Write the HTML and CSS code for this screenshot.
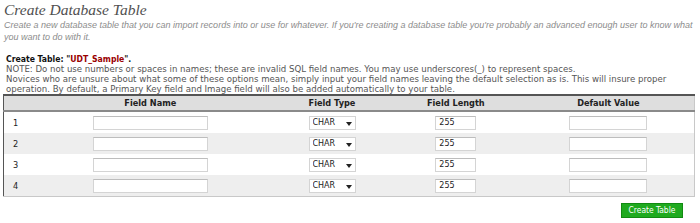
FILE: index.html
```html
<!DOCTYPE html>
<html>
<head>
<meta charset="utf-8">
<link rel="stylesheet" href="styles.css">
</head>
<body>
<div class="page">
  <h1 class="title">Create Database Table</h1>
  <p class="desc">Create a new database table that you can import records into or use for whatever. If you're creating a database table you're probably an advanced enough user to know what you want to do with it.</p>
  <p class="create">Create Table: "<span class="tname">UDT_Sample</span>".</p>
  <p class="note">NOTE: Do not use numbers or spaces in names; these are invalid SQL field names. You may use underscores(_) to represent spaces.<br>Novices who are unsure about what some of these options mean, simply input your field names leaving the default selection as is. This will insure proper operation. By default, a Primary Key field and Image field will also be added automatically to your table.</p>
  <table class="fields">
    <colgroup>
      <col class="c-num"><col class="c-name"><col class="c-type"><col class="c-len"><col class="c-def">
    </colgroup>
    <thead>
      <tr><th></th><th>Field Name</th><th>Field Type</th><th>Field Length</th><th>Default Value</th></tr>
    </thead>
    <tbody>
      <tr><td class="num">1</td><td><input class="in-name" type="text"></td><td><div class="sel"><select><option>CHAR</option></select><svg class="arr" width="6" height="4" viewBox="0 0 6 4"><path d="M0 0H6L3 4Z" fill="#222"/></svg></div></td><td><input class="in-len" type="text" value="255"></td><td><input class="in-def" type="text"></td></tr>
      <tr><td class="num">2</td><td><input class="in-name" type="text"></td><td><div class="sel"><select><option>CHAR</option></select><svg class="arr" width="6" height="4" viewBox="0 0 6 4"><path d="M0 0H6L3 4Z" fill="#222"/></svg></div></td><td><input class="in-len" type="text" value="255"></td><td><input class="in-def" type="text"></td></tr>
      <tr><td class="num">3</td><td><input class="in-name" type="text"></td><td><div class="sel"><select><option>CHAR</option></select><svg class="arr" width="6" height="4" viewBox="0 0 6 4"><path d="M0 0H6L3 4Z" fill="#222"/></svg></div></td><td><input class="in-len" type="text" value="255"></td><td><input class="in-def" type="text"></td></tr>
      <tr><td class="num">4</td><td><input class="in-name" type="text"></td><td><div class="sel"><select><option>CHAR</option></select><svg class="arr" width="6" height="4" viewBox="0 0 6 4"><path d="M0 0H6L3 4Z" fill="#222"/></svg></div></td><td><input class="in-len" type="text" value="255"></td><td><input class="in-def" type="text"></td></tr>
    </tbody>
  </table>
  <div class="actions"><button class="btn" type="button">Create Table</button></div>
</div>
</body>
</html>
```
FILE: styles.css
```css
html, body { margin: 0; padding: 0; background: #fff; }
.page { padding: 0 5px 0 3px; width: 692px; }
.title {
  margin: 0 0 0 1px;
  font-family: "Liberation Serif", "DejaVu Serif", serif;
  font-style: italic;
  font-weight: normal;
  font-size: 15.5px;
  line-height: 18px;
  color: #505050;
  padding-top: 1px;
}
.desc {
  margin: 0 0 0 1px;
  font-family: "Liberation Sans", Arial, sans-serif;
  font-style: italic;
  font-size: 9px;
  line-height: 12px;
  color: #8c8c8c;
}
.create {
  margin: 11px 0 0 3px;
  font-family: "DejaVu Sans Condensed", "DejaVu Sans", sans-serif;
  font-weight: bold;
  font-size: 8.6px;
  line-height: 10px;
  color: #111;
}
.tname { color: #9a0000; }
.note {
  margin: 0 0 0 3px;
  font-family: "DejaVu Sans", sans-serif;
  font-size: 8.6px;
  line-height: 10px;
  color: #555;
}
.fields {
  margin-top: 0;
  width: 692px;
  border-collapse: collapse;
  border-top: 2px solid #555;
  border-left: 1px solid #555;
  border-right: 1px solid #c8c8c8;
  border-bottom: 1px solid #c8c8c8;
  font-family: "DejaVu Sans", sans-serif;
  font-size: 8.2px;
  color: #222;
}
.c-num { width: 22px; }
.c-name { width: 250px; }
.c-type { width: 114px; }
.c-len { width: 134px; }
.c-def { width: 172px; }
.fields th {
  background: #dedede;
  height: 14px;
  line-height: 14px;
  padding: 0;
  font-weight: bold;
  text-align: center;
  border-bottom: 2px solid #8a8a8a;
  color: #222;
}
.fields td { height: 21px; padding: 0; text-align: center; }
.fields tbody tr:nth-child(even) td { background: #eeeeee; }
.fields td.num { text-align: center; padding-left: 2px; }
input[type=text] {
  box-sizing: border-box;
  height: 14px;
  margin: 0;
  padding: 0 0 0 3px;
  border: 1px solid #d4d4d4;
  border-top-color: #bdbdbd;
  background: #fff;
  font-family: "DejaVu Sans", sans-serif;
  font-size: 8px;
  color: #222;
  vertical-align: middle;
}
.in-name { width: 115px; }
.in-len { width: 41px; }
.in-def { width: 78px; }
.sel {
  display: inline-flex;
  align-items: center;
  box-sizing: border-box;
  width: 47px;
  height: 14px;
  border: 1px solid #d4d4d4;
  background: #fff;
  vertical-align: middle;
}
.sel select {
  appearance: none;
  -webkit-appearance: none;
  border: 0;
  background: transparent;
  padding: 0 0 0 3px;
  margin: 0;
  width: 33px;
  font-family: "DejaVu Sans", sans-serif;
  font-size: 8px;
  color: #222;
  outline: none;
}
.sel .arr { margin-left: 3px; margin-top: 3px; }
.actions { display: flex; justify-content: flex-end; padding: 6px 12px 0 0; }
.btn {
  box-sizing: border-box;
  width: 62px;
  height: 15px;
  padding: 0;
  border: 1px solid #128a12;
  background: #1faa1f;
  color: #fff;
  font-family: "DejaVu Sans Condensed", "DejaVu Sans", sans-serif;
  font-size: 8.4px;
  line-height: 13px;
}
```
